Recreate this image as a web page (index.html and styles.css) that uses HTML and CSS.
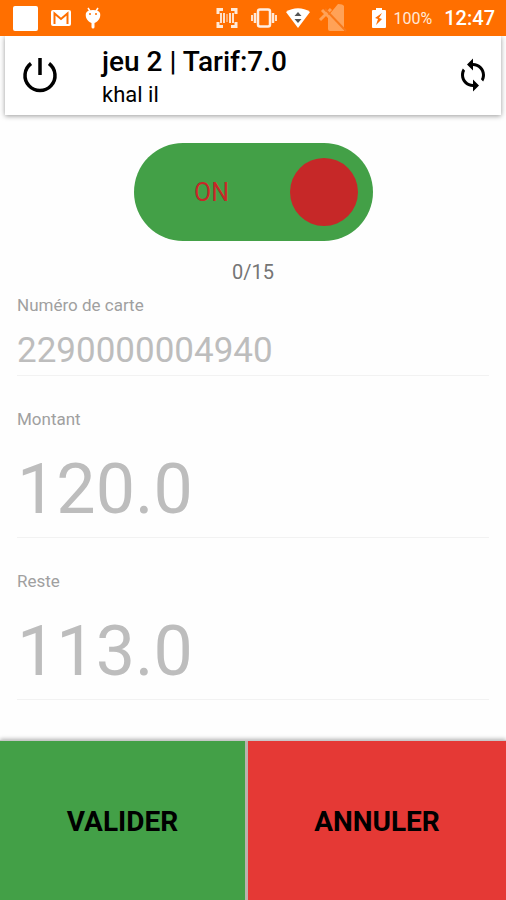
FILE: index.html
```html
<!DOCTYPE html>
<html lang="fr">
<head>
    <meta charset="UTF-8">
    <meta name="viewport" content="width=device-width, initial-scale=1.0">
    <title>jeu 2</title>
    <link rel="stylesheet" href="styles.css">
</head>
<body>
    <div class="status-bar">
        <div class="status-left">
            <span class="status-square"></span>
            <svg width="22" height="18" viewBox="0 0 22 18">
                <rect x="1" y="1" width="20" height="16" rx="2" fill="#fff"/>
                <path d="M4.500 15V4.500L11 10l6.500-5.500V15" fill="none" stroke="#ff6f00" stroke-width="2"/>
            </svg>
            <svg width="18" height="22" viewBox="0 0 18 22">
                <path d="M4 1l2 3M14 1l-2 3" stroke="#fff" stroke-width="1.500"/>
                <path d="M2 6c1-2 3-3 7-3s6 1 7 3c1 4-1 8-5.500 10V20a1.500 1.500 0 0 1-3 0v-4C3 14 1 10 2 6z" fill="#fff"/>
                <circle cx="6" cy="7" r="1" fill="#ff6f00"/>
                <circle cx="12" cy="7" r="1" fill="#ff6f00"/>
            </svg>
        </div>
        <div class="status-right">
            <svg width="22" height="20" viewBox="0 0 22 20">
                <path d="M7 1.500H2V6M15 1.500h5V6M7 18.500H2V14M15 18.500h5V14" fill="none" stroke="#ffe9d8" stroke-width="3"/>
                <path d="M5 5v10M8 5v10M14 5v10M17 5v10" stroke="#ffe0c8" stroke-width="2"/>
                <path d="M11 6v8" stroke="#ffe0c8" stroke-width="1"/>
            </svg>
            <svg class="icon-vibrate" width="28" height="20" viewBox="0 0 28 20">
                <rect x="8" y="1.500" width="12" height="17" rx="2" fill="none" stroke="#ffeee2" stroke-width="2.500"/>
                <path d="M5 5v10M23 5v10" stroke="#ffe9d8" stroke-width="2.500"/>
                <path d="M2 7v6M26 7v6" stroke="#ffe0c8" stroke-width="2"/>
            </svg>
            <svg width="24" height="20" viewBox="0 0 24 20">
                <path d="M0 4C7-1 17-1 24 4L12 20z" fill="#fff"/>
                <path d="M12 4l3.500 4h-7zM12 15l3.500-4h-7z" fill="#555"/>
            </svg>
            <svg class="icon-signal" width="30" height="30" viewBox="0 0 30 30">
                <path d="M10 13L20 1q5 0 6 2v25H12q-2 0-2-2z" fill="#ffa257"/>
                <path d="M2 17L13 6M4 7l9 9" stroke="#ffa257" stroke-width="3"/>
                <path d="M7 6l21 22" stroke="#f8791a" stroke-width="2"/>
            </svg>
            <svg width="14" height="20" viewBox="0 0 14 20">
                <path d="M4 0h6v2h3a1 1 0 0 1 1 1v16a1 1 0 0 1-1 1H1a1 1 0 0 1-1-1V3a1 1 0 0 1 1-1h3z" fill="#fff"/>
                <path d="M10 5L3 10l3 1-2 6 6-6-3-1z" fill="#ff6f00"/>
            </svg>
            <span class="battery-level">100%</span>
            <span class="clock">12:47</span>
        </div>
    </div>

    <header class="toolbar">
        <button class="icon-button" type="button" aria-label="Quitter">
            <svg width="36" height="36" viewBox="0 0 36 36">
                <path d="M18 1v17M9 6.500a15 15 0 1 0 18 0" fill="none" stroke="#000" stroke-width="3.500"/>
            </svg>
        </button>
        <div class="title">
            <h1>jeu 2 | Tarif:7.0</h1>
            <p>khal il</p>
        </div>
        <button class="icon-button" type="button" aria-label="Actualiser">
            <svg width="36" height="36" viewBox="0 0 24 24">
                <path d="M12 4V1L8 5l4 4V6c3.310 0 6 2.690 6 6 0 1.010-.25 1.970-.7 2.800l1.460 1.460C19.540 15.030 20 13.570 20 12c0-4.420-3.580-8-8-8zm0 14c-3.310 0-6-2.690-6-6 0-1.010.25-1.970.7-2.800L5.240 7.740C4.460 8.970 4 10.430 4 12c0 4.420 3.580 8 8 8v3l4-4-4-4v3z"/>
            </svg>
        </button>
    </header>

    <main class="content">
        <label class="switch">
            <input type="checkbox" checked>
            <span class="switch-text">ON</span>
            <span class="switch-knob"></span>
        </label>
        <p class="counter">0/15</p>

        <form class="fields" id="card-form">
            <div class="field">
                <label for="card">Numéro de carte</label>
                <input id="card" type="text" value="2290000004940" disabled>
            </div>
            <div class="field field-amount">
                <label for="amount">Montant</label>
                <input id="amount" type="text" value="120.0" disabled>
            </div>
            <div class="field field-amount">
                <label for="rest">Reste</label>
                <input id="rest" type="text" value="113.0" disabled>
            </div>
        </form>
    </main>

    <footer class="actions">
        <button class="validate" type="submit" form="card-form">VALIDER</button>
        <button class="cancel" type="reset" form="card-form">ANNULER</button>
    </footer>
</body>
</html>
```

FILE: styles.css
```css
* {
    box-sizing: border-box;
}

body {
    display: flex;
    flex-direction: column;
    min-height: 100vh;
    margin: 0;
    background-color: #fefefe;
    color: #000;
    font-family: Roboto, sans-serif;
}

h1, p {
    margin: 0;
}

button {
    border: 0;
    padding: 0;
    font-family: inherit;
    cursor: pointer;
}

svg {
    display: block;
    flex: none;
}

/* Status bar */
.status-bar {
    display: flex;
    justify-content: space-between;
    align-items: center;
    height: 36px;
    padding: 0 11px 0 13px;
    background-color: #ff6f00;
    color: #fff;
}

.status-left,
.status-right {
    display: flex;
    align-items: center;
}

.status-left {
    gap: 12px;
}

.status-right {
    gap: 8px;
}

.status-square {
    width: 25px;
    height: 25px;
    border-radius: 2px;
    background-color: #fff;
}

.icon-vibrate {
    margin-left: 4px;
}

.icon-signal {
    margin-right: 16px;
}

.battery-level {
    color: #ffe9d8;
    font-size: 16px;
}

.clock {
    margin-left: 4px;
    font-size: 20px;
    font-weight: 500;
}

/* Toolbar */
.toolbar {
    display: flex;
    align-items: center;
    height: 79px;
    margin: 0 5px;
    padding: 0 10px 2px 17px;
    background-color: #fff;
    box-shadow: 0 1px 5px rgba(0, 0, 0, 0.4);
    clip-path: inset(0 -5px -8px -5px);
}

.icon-button {
    background: none;
}

.title {
    flex: 1;
    padding: 4px 0 0 44px;
}

.title h1 {
    font-size: 28px;
    font-weight: 500;
    line-height: 36px;
}

.title p {
    font-size: 22px;
    line-height: 30px;
}

/* Content */
.content {
    display: flex;
    flex-direction: column;
    padding: 28px 17px 36px;
}

.switch {
    display: flex;
    align-items: center;
    align-self: center;
    width: 239px;
    height: 98px;
    padding-right: 15px;
    border-radius: 49px;
    background-color: #43a047;
    color: #c62828;
    cursor: pointer;
}

.switch input {
    width: 0;
    height: 0;
    margin: 0;
    appearance: none;
}

.switch-text {
    flex: 1;
    text-align: center;
    font-size: 25px;
}

.switch-knob {
    width: 68px;
    height: 68px;
    border-radius: 50%;
    background-color: #c62828;
}

.counter {
    margin-top: 15px;
    color: #757575;
    font-size: 20px;
    line-height: 32px;
    text-align: center;
}

.fields {
    display: flex;
    flex-direction: column;
    gap: 33px;
    margin-top: 7px;
}

.field {
    display: flex;
    flex-direction: column;
    gap: 11px;
}

.field label {
    color: #a0a0a0;
    font-size: 17px;
    line-height: 20px;
}

.field input {
    width: 100%;
    height: 50px;
    padding: 0;
    border: 0;
    border-bottom: 1px solid #f2f2f2;
    background: none;
    color: #bdbdbd;
    font-family: inherit;
    font-size: 35px;
}

.field-amount input {
    height: 98px;
    font-size: 70px;
}

/* Bottom buttons */
.actions {
    display: flex;
    gap: 3px;
    height: 160px;
    margin-top: auto;
    border-top: 1px solid #c8c8c8;
    background-color: #b9b3ad;
    box-shadow: 0 -1px 4px rgba(0, 0, 0, 0.3);
}

.actions button {
    padding-top: 2px;
    font-size: 28px;
    font-weight: 700;
    color: #000;
}

.validate {
    flex: 245;
    background-color: #43a047;
}

.cancel {
    flex: 258;
    background-color: #e53935;
}
```
